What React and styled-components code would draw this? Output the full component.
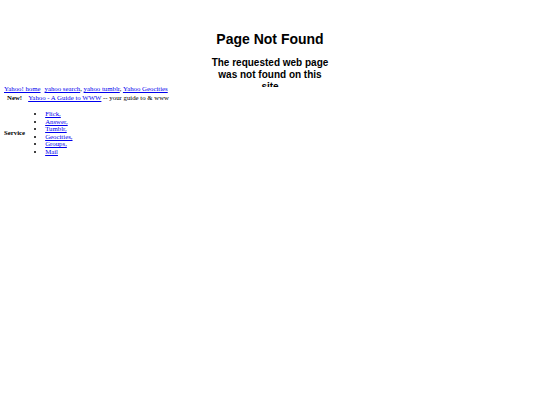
import React from "react";
import styled, { createGlobalStyle } from "styled-components";

const Global = createGlobalStyle`
  html, body { margin: 0; padding: 0; background: #fff; }
  body { font-family: "Liberation Serif", "Times New Roman", serif; color: #000; }
`;

const Header = styled.div`
  height: 87px;
  overflow: hidden;
  text-align: center;
  font-family: "Liberation Sans", Arial, sans-serif;
  padding-top: 31px;
  box-sizing: border-box;
`;

const Title = styled.h1`
  margin: 0 0 10px;
  font-size: 14px;
  line-height: 16px;
  font-weight: bold;
`;

const Sub = styled.h2`
  margin: 0 auto;
  width: 118px;
  font-size: 10px;
  line-height: 12px;
  font-weight: bold;
`;

const Table = styled.table`
  font-size: 6.8px;
  line-height: 8px;
  border-spacing: 1px;
  margin: -3px 0 0 2px;
`;

const Cell = styled.td`
  padding: 0 1px;
  vertical-align: middle;
  white-space: nowrap;
`;

const Head = styled.th`
  padding: 0 1px;
  font-weight: bold;
  text-align: center;
`;

const Link = styled.a`
  color: #0000ee;
  text-decoration: underline;
`;

const Gap = styled.span`
  display: inline-block;
  width: 4px;
`;

const List = styled.ul`
  margin: 7px 0;
  padding-left: 17px;
  list-style: disc;
  line-height: 7.6px;
`;

const services = ["Flick,", "Answer,", "Tumblr,", "Geocities,", "Groups,", "Mail"];

export default function App() {
  return (
    <>
      <Global />
      <Header>
        <Title>Page Not Found</Title>
        <Sub>The requested web page was not found on this site</Sub>
      </Header>
      <Table>
        <tbody>
          <tr>
            <Cell colSpan={2}>
              <Link href="#">Yahoo! home</Link>
              <Gap />
              <Link href="#">yahoo search</Link>, <Link href="#">yahoo tumblr</Link>,{" "}
              <Link href="#">Yahoo Geocities</Link>
            </Cell>
          </tr>
          <tr>
            <Head>New!</Head>
            <Cell>
              <Link href="#">Yahoo - A Guide to WWW</Link> -- your guide to &amp; www
            </Cell>
          </tr>
          <tr>
            <Head>Service</Head>
            <Cell>
              <List>
                {services.map((s) => (
                  <li key={s}>
                    <Link href="#">{s}</Link>
                  </li>
                ))}
              </List>
            </Cell>
          </tr>
        </tbody>
      </Table>
    </>
  );
}
